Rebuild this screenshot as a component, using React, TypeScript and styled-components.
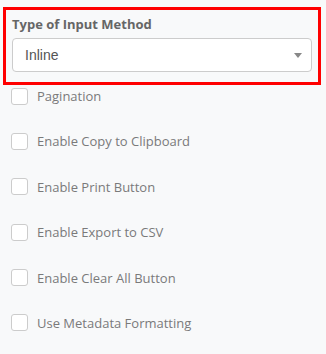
import React from "react";
import styled, { createGlobalStyle } from "styled-components";

const Global = createGlobalStyle`
  html, body { margin: 0; padding: 0; background: #f8f9fa; }
  body { font-family: "Open Sans", sans-serif; }
  * { box-sizing: border-box; }
`;

const Page = styled.div`
  width: 326px;
  height: 354px;
  background: #f8f9fa;
  padding: 7px 5px 0 3px;
`;

const Highlight = styled.div`
  border: 3px solid #ff0000;
  padding: 6px 6px 10px 6px;
  display: flex;
  flex-direction: column;
  gap: 6px;
`;

const FieldLabel = styled.div`
  font-family: "Open Sans", sans-serif;
  font-weight: 700;
  font-size: 13px;
  line-height: 16px;
  color: #666;
`;

const SelectBox = styled.div`
  position: relative;
  height: 34px;
  background: #fff;
  border: 1px solid #ccc;
  border-radius: 4px;
  display: flex;
  align-items: center;
  padding: 0 12px;
  font-family: "Liberation Sans", Arial, sans-serif;
  font-size: 14px;
  color: #555;
`;

const Caret = styled.span`
  margin-left: auto;
  width: 0;
  height: 0;
  border-left: 4px solid transparent;
  border-right: 4px solid transparent;
  border-top: 5px solid #888;
  margin-right: -3px;
  margin-top: 1px;
`;

const List = styled.div`
  display: flex;
  flex-direction: column;
  gap: 29.4px;
  padding: 3px 0 0 8px;
`;

const Row = styled.label`
  display: flex;
  align-items: center;
  height: 16px;
  gap: 9px;
  font-family: "Open Sans", sans-serif;
  font-size: 13px;
  color: #7a7a7a;
`;

const Box = styled.span`
  width: 17px;
  height: 17px;
  background: #fff;
  border: 1px solid #ccc;
  border-radius: 3px;
  flex: none;
`;

const items = [
  "Pagination",
  "Enable Copy to Clipboard",
  "Enable Print Button",
  "Enable Export to CSV",
  "Enable Clear All Button",
  "Use Metadata Formatting",
];

export default function App() {
  return (
    <Page>
      <Global />
      <Highlight>
        <FieldLabel>Type of Input Method</FieldLabel>
        <SelectBox>
          Inline
          <Caret />
        </SelectBox>
      </Highlight>
      <List>
        {items.map((t) => (
          <Row key={t}>
            <Box />
            {t}
          </Row>
        ))}
      </List>
    </Page>
  );
}
